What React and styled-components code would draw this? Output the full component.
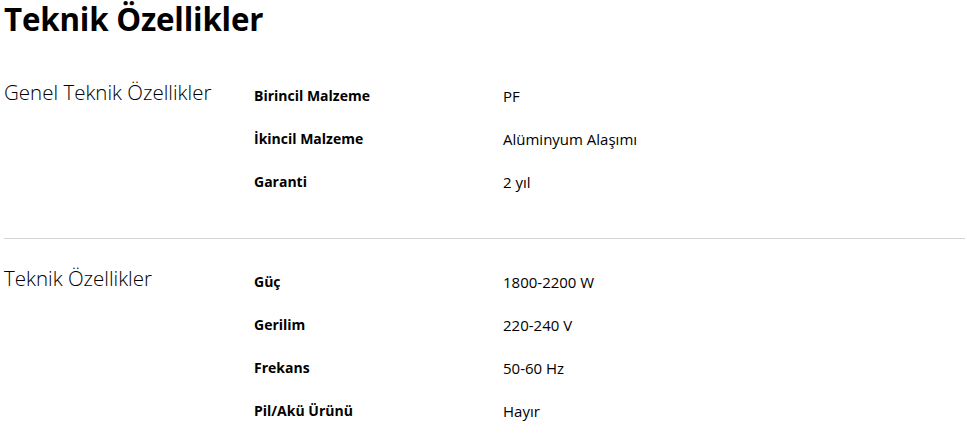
import styled, { createGlobalStyle } from 'styled-components';

const GlobalStyle = createGlobalStyle`
  body {
    margin: 0;
    background: #fff;
    font-family: "Open Sans", "Noto Sans", sans-serif;
    color: #000;
  }
`;

const specs = [
  {
    title: 'Genel Teknik Özellikler',
    rows: [
      ['Birincil Malzeme', 'PF'],
      ['İkincil Malzeme', 'Alüminyum Alaşımı'],
      ['Garanti', '2 yıl'],
    ],
  },
  {
    title: 'Teknik Özellikler',
    rows: [
      ['Güç', '1800-2200 W'],
      ['Gerilim', '220-240 V'],
      ['Frekans', '50-60 Hz'],
      ['Pil/Akü Ürünü', 'Hayır'],
    ],
  },
];

export default function App() {
  return (
    <>
      <GlobalStyle />
      <Page>
        <Heading>Teknik Özellikler</Heading>
        {specs.map((section, i) => (
          <Section key={section.title} $divider={i > 0}>
            <SectionTitle>{section.title}</SectionTitle>
            <Rows>
              {section.rows.map(([label, value]) => (
                <Row key={label}>
                  <Label>{label}</Label>
                  <Value>{value}</Value>
                </Row>
              ))}
            </Rows>
          </Section>
        ))}
      </Page>
    </>
  );
}

const Page = styled.div`
  padding: 0 2px 0 4px;
`;

const Heading = styled.h1`
  margin: 0;
  font-size: 31.3px;
  font-weight: 700;
  line-height: 38px;
  letter-spacing: -0.2px;
`;

const Section = styled.section`
  display: grid;
  grid-template-columns: 250px 1fr;
  padding: ${(p) => (p.$divider ? '21px 0 0' : '36px 0 35px')};
  border-top: ${(p) => (p.$divider ? '1px solid #d6d6d6' : 'none')};
`;

const SectionTitle = styled.h2`
  margin: 0;
  font-size: 20.5px;
  font-weight: 300;
  line-height: 36px;
`;

const Rows = styled.div`
  display: flex;
  flex-direction: column;
`;

const Row = styled.div`
  display: grid;
  grid-template-columns: 249px 1fr;
  align-items: center;
  height: 43px;
`;

const Label = styled.span`
  font-size: 14px;
  font-weight: 700;
`;

const Value = styled.span`
  font-size: 15px;
  font-weight: 400;
`;
